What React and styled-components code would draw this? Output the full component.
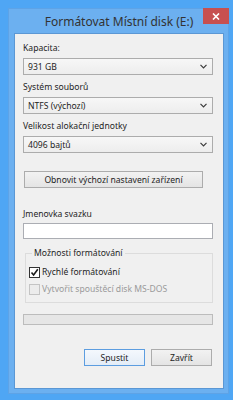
import styled, { createGlobalStyle } from "styled-components";

const GlobalStyle = createGlobalStyle`
  html, body {
    margin: 0;
    padding: 0;
    background: #4fa6f4;
  }
  body {
    font-family: "Noto Sans", "Liberation Sans", sans-serif;
  }
`;

export const Screen = styled.div`
  width: 233px;
  height: 400px;
  padding: 8px 0 0 8px;
  box-sizing: border-box;
`;

export const Frame = styled.div`
  width: 221px;
  height: 386px;
  box-sizing: border-box;
  background: #6cb0f0;
  border: 1px solid #5ea3e6;
  display: flex;
  flex-direction: column;
  padding: 0 4px 4px 5px;
`;

export const TitleBar = styled.div`
  height: 24px;
  flex-shrink: 0;
  display: flex;
  align-items: center;
  justify-content: center;
  position: relative;
`;

export const Title = styled.div`
  font-size: 12px;
  color: #333333;
  margin-top: 1px;
`;

export const CloseButton = styled.div`
  position: absolute;
  top: -1px;
  right: -5px;
  width: 26px;
  height: 16px;
  background: #c75050;
  display: flex;
  align-items: center;
  justify-content: center;
`;

export const Client = styled.div`
  flex: 1;
  background: #f0f0f0;
  border: 1px solid #5b97d4;
  padding: 7px 10px 0 8px;
  display: flex;
  flex-direction: column;
  & > * {
    flex-shrink: 0;
  }
`;

export const Label = styled.div`
  font-size: 8.6px;
  line-height: 14px;
  color: #1e1e1e;
  margin-top: ${(p) => p.$top || 0}px;
`;

export const Combo = styled.div`
  height: 17px;
  margin-top: 3px;
  box-sizing: border-box;
  border: 1px solid #acacac;
  background: linear-gradient(#f7f7f7, #ededed);
  display: flex;
  align-items: center;
  justify-content: space-between;
  padding: 0 5px 0 4px;
  font-size: 8.6px;
  color: #1e1e1e;
`;

export const PushButton = styled.div`
  height: 17px;
  box-sizing: border-box;
  border: 1px solid ${(p) => (p.$default ? "#5c9de0" : "#acacac")};
  background: ${(p) =>
    p.$default
      ? "linear-gradient(#f4f8fd, #e4edf7)"
      : "linear-gradient(#f2f2f2, #e4e4e4)"};
  display: flex;
  align-items: center;
  justify-content: center;
  font-size: 8.6px;
  color: #1e1e1e;
  width: ${(p) => p.$width}px;
  margin-left: ${(p) => p.$left || 0}px;
  margin-top: ${(p) => p.$top || 0}px;
`;

export const TextInput = styled.div`
  height: 16px;
  margin-top: 2px;
  box-sizing: border-box;
  border: 1px solid #abadb3;
  background: #ffffff;
`;

export const Group = styled.fieldset`
  margin: 8px 0 0 2px;
  padding: 8px 0 7px 3px;
  border: 1px solid #dcdcdc;
  min-width: 0;
  display: flex;
  flex-direction: column;
  gap: 6px;
`;

export const Legend = styled.legend`
  font-size: 8.6px;
  color: #1e1e1e;
  padding: 0 2px;
  margin-left: 3px;
  line-height: 12px;
`;

export const CheckRow = styled.div`
  display: flex;
  align-items: center;
  gap: 2px;
  font-size: 8.6px;
  line-height: 11px;
  color: ${(p) => (p.$disabled ? "#9a9a9a" : "#1e1e1e")};
`;

export const Box = styled.div`
  width: 11px;
  height: 11px;
  box-sizing: border-box;
  border: 1px solid ${(p) => (p.$disabled ? "#c4c4c4" : "#333333")};
  background: ${(p) => (p.$disabled ? "#ececec" : "#ffffff")};
  display: flex;
  align-items: center;
  justify-content: center;
`;

export const Progress = styled.div`
  height: 11px;
  margin-top: 11px;
  box-sizing: border-box;
  border: 1px solid #bcbcbc;
  background: #e6e6e6;
`;

export const ButtonRow = styled.div`
  display: flex;
  justify-content: flex-end;
  gap: 6px;
  margin-top: 24px;
  padding-right: 1px;
`;

const Chevron = () => (
  <svg width="7" height="5" viewBox="0 0 7 5">
    <path d="M0.5 0.8 L3.5 3.8 L6.5 0.8" fill="none" stroke="#3c3c3c" strokeWidth="1.2" />
  </svg>
);

const fields = [
  { label: "Kapacita:", value: "931 GB", top: 0 },
  { label: "Systém souborů", value: "NTFS (výchozí)", top: 5 },
  { label: "Velikost alokační jednotky", value: "4096 bajtů", top: 5 },
];

const App = () => {
  return (
    <Screen>
      <GlobalStyle />
      <Frame>
        <TitleBar>
          <Title>Formátovat Místní disk (E:)</Title>
          <CloseButton>
            <svg width="8" height="7" viewBox="0 0 8 7">
              <path d="M1 0.5 L7 6.5 M7 0.5 L1 6.5" stroke="#ffffff" strokeWidth="1.6" />
            </svg>
          </CloseButton>
        </TitleBar>
        <Client>
          {fields.map((f) => (
            <div key={f.label}>
              <Label $top={f.top}>{f.label}</Label>
              <Combo>
                <span>{f.value}</span>
                <Chevron />
              </Combo>
            </div>
          ))}
          <PushButton $width={179} $left={1} $top={18}>
            Obnovit výchozí nastavení zařízení
          </PushButton>
          <Label $top={19}>Jmenovka svazku</Label>
          <TextInput />
          <Group>
            <Legend>Možnosti formátování</Legend>
            <CheckRow>
              <Box>
                <svg width="9" height="9" viewBox="0 0 9 9">
                  <path d="M1.5 4.5 L3.6 7 L7.8 1.2" fill="none" stroke="#1a1a1a" strokeWidth="1.6" />
                </svg>
              </Box>
              Rychlé formátování
            </CheckRow>
            <CheckRow $disabled>
              <Box $disabled />
              Vytvořit spouštěcí disk MS-DOS
            </CheckRow>
          </Group>
          <Progress />
          <ButtonRow>
            <PushButton $width={61} $default>
              Spustit
            </PushButton>
            <PushButton $width={61}>Zavřít</PushButton>
          </ButtonRow>
        </Client>
      </Frame>
    </Screen>
  );
};

export default App;
